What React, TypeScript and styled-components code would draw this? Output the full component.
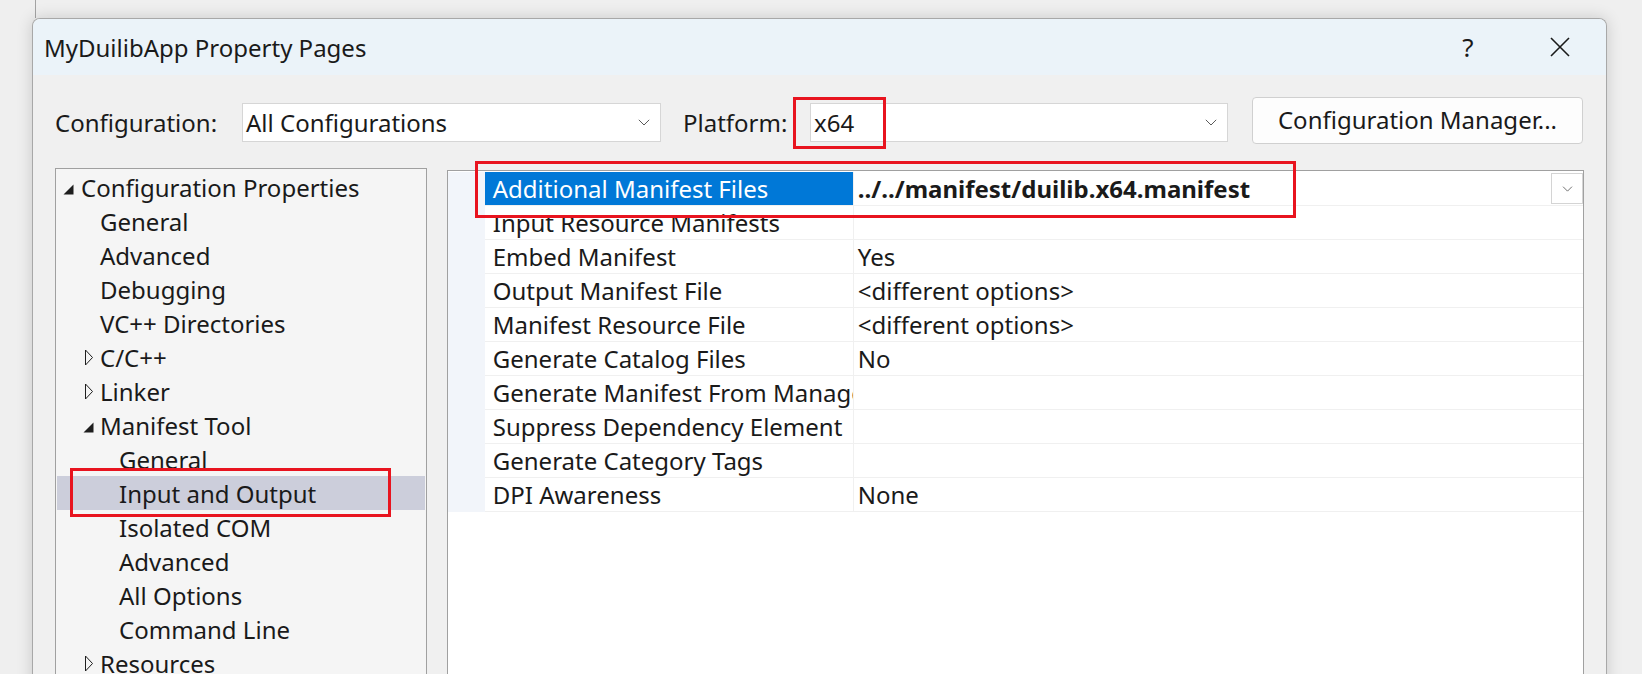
import React from 'react';
import styled, { createGlobalStyle } from 'styled-components';

const GlobalStyle = createGlobalStyle`
  html, body {
    margin: 0;
    padding: 0;
    width: 1642px;
    height: 674px;
    overflow: hidden;
    background: #efefef;
  }
  body {
    font-family: "Noto Sans", "Open Sans", sans-serif;
    color: #1a1a1a;
  }
  * { box-sizing: border-box; }
`;

const Page = styled.div`
  width: 1642px;
  height: 674px;
  overflow: hidden;
  padding: 18px 35px 0 32px;
  background-color: #efefef;
  background-image: linear-gradient(to right, transparent 35px, #a3a3a3 35px, #a3a3a3 36px, transparent 36px);
  background-size: 100% 18px;
  background-repeat: no-repeat;
`;

const Dialog = styled.div`
  width: 1575px;
  height: 720px;
  border: 1px solid #a8a8a8;
  border-bottom: none;
  border-radius: 8px 8px 0 0;
  background: #f0f0f0;
  box-shadow: 0 0 16px rgba(0, 0, 0, 0.16);
  display: flex;
  flex-direction: column;
  overflow: hidden;
`;

const TitleBar = styled.div`
  flex: none;
  height: 56px;
  display: flex;
  align-items: center;
  background: #ebf3f9;
  padding-left: 11px;
`;

const TitleText = styled.div`
  flex: 1;
  font-size: 24px;
  color: #1a1a1a;
`;

const CaptionButton = styled.div`
  width: 92px;
  height: 56px;
  display: flex;
  align-items: center;
  justify-content: center;
  font-size: 26px;
  color: #1a1a1a;
`;

const Body = styled.div`
  flex: 1;
  display: flex;
  flex-direction: column;
  padding: 22px 22px 0 22px;
`;

const Toolbar = styled.div`
  display: flex;
  align-items: flex-start;
  height: 47px;
  padding-left: 0;
`;

const FieldLabel = styled.div<{ $w: number; $ml?: number }>`
  width: ${(p) => p.$w}px;
  margin-left: ${(p) => p.$ml ?? 0}px;
  margin-top: 6px;
  height: 39px;
  line-height: 39px;
  font-size: 24px;
  white-space: nowrap;
`;

const Combo = styled.div<{ $w: number }>`
  position: relative;
  width: ${(p) => p.$w}px;
  height: 39px;
  margin-top: 6px;
  background: #ffffff;
  border: 1px solid #d6d6d6;
  display: flex;
  align-items: center;
  padding-left: 3px;
  padding-right: 10px;
  font-size: 24px;
`;

const ComboText = styled.span`
  flex: 1;
  white-space: nowrap;
`;

const Chevron = styled.svg`
  flex: none;
  display: block;
`;

const ManagerButton = styled.div`
  margin-left: 24px;
  width: 331px;
  height: 47px;
  border: 1px solid #d0d0d0;
  border-radius: 4px;
  background: #fdfdfd;
  display: flex;
  align-items: center;
  justify-content: center;
  font-size: 24px;
  padding-bottom: 2px;
`;

const Panels = styled.div`
  margin-top: 24px;
  display: flex;
  align-items: flex-start;
  gap: 20px;
  flex: 1;
`;

const TreePanel = styled.div`
  width: 372px;
  height: 560px;
  border: 1px solid #a0a0a0;
  background: #f5f5f5;
  padding: 1px;
`;

const TreeRow = styled.div<{ $level: number; $selected?: boolean }>`
  position: relative;
  height: 34px;
  display: flex;
  align-items: center;
  padding-left: ${(p) => 5 + p.$level * 19}px;
  background: ${(p) => (p.$selected ? '#cccedb' : 'transparent')};
  font-size: 24px;
  white-space: nowrap;
`;

const Expander = styled.div`
  width: 19px;
  height: 34px;
  flex: none;
  display: flex;
  align-items: center;
`;

const GridPanel = styled.div`
  margin-top: 2px;
  width: 1138px;
  height: 560px;
  border: 1px solid #a0a0a0;
  background: #ffffff;
  padding-top: 1px;
`;

const GridRow = styled.div`
  position: relative;
  display: grid;
  grid-template-columns: 37px 368px 1fr;
  height: 34px;
`;

const Gutter = styled.div`
  background: #f2f5fa;
`;

const NameCell = styled.div<{ $selected?: boolean }>`
  height: 34px;
  border-bottom: 1px solid #f0f0f0;
  background: ${(p) => (p.$selected ? '#0078d7' : '#ffffff')};
  color: ${(p) => (p.$selected ? '#ffffff' : '#1a1a1a')};
  font-size: 24px;
  line-height: 33px;
  padding-left: 8px;
  white-space: nowrap;
  overflow: hidden;
`;

const ValueCell = styled.div<{ $bold?: boolean }>`
  height: 34px;
  display: flex;
  align-items: flex-start;
  border-bottom: 1px solid #f0f0f0;
  border-left: 1px solid #f0f0f0;
  font-size: 24px;
  font-weight: ${(p) => (p.$bold ? 700 : 400)};
  line-height: 33px;
  padding-left: 4px;
  white-space: nowrap;
  overflow: hidden;
`;

const ValueText = styled.span`
  flex: 1;
`;

const DropButton = styled.div`
  flex: none;
  width: 32px;
  height: 31px;
  margin-top: 1px;
  border: 1px solid #d4d4d4;
  background: #ffffff;
  display: flex;
  align-items: center;
  justify-content: center;
`;

const Highlight = styled.div<{ $l: number; $t: number; $w: number; $h: number }>`
  position: absolute;
  left: ${(p) => p.$l}px;
  top: ${(p) => p.$t}px;
  width: ${(p) => p.$w}px;
  height: ${(p) => p.$h}px;
  border: 3px solid #e8141f;
  pointer-events: none;
  z-index: 3;
`;

const ChevronDown = ({ w = 12, h = 7 }: { w?: number; h?: number }) => (
  <Chevron width={w} height={h} viewBox="0 0 12 7">
    <path d="M0.8 0.8 L6 6 L11.2 0.8" fill="none" stroke="#5a5a5a" strokeWidth="1" />
  </Chevron>
);

const ExpandedIcon = ({ offset }: { offset: number }) => (
  <svg width="11" height="11" viewBox="0 0 11 11" style={{ marginLeft: offset, marginTop: 4 }}>
    <path d="M10.5 0.5 L10.5 10.5 L0.5 10.5 Z" fill="#1e1e1e" />
  </svg>
);

const CollapsedIcon = () => (
  <svg width="10" height="17" viewBox="0 0 10 17" style={{ marginLeft: 3 }}>
    <path d="M1.5 1 L8.5 8.5 L1.5 16 Z" fill="none" stroke="#1e1e1e" strokeWidth="1" />
  </svg>
);

type TreeItem = { label: string; level: number; state?: 'open' | 'closed'; selected?: boolean };

const treeItems: TreeItem[] = [
  { label: 'Configuration Properties', level: 0, state: 'open' },
  { label: 'General', level: 1 },
  { label: 'Advanced', level: 1 },
  { label: 'Debugging', level: 1 },
  { label: 'VC++ Directories', level: 1 },
  { label: 'C/C++', level: 1, state: 'closed' },
  { label: 'Linker', level: 1, state: 'closed' },
  { label: 'Manifest Tool', level: 1, state: 'open' },
  { label: 'General', level: 2 },
  { label: 'Input and Output', level: 2, selected: true },
  { label: 'Isolated COM', level: 2 },
  { label: 'Advanced', level: 2 },
  { label: 'All Options', level: 2 },
  { label: 'Command Line', level: 2 },
  { label: 'Resources', level: 1, state: 'closed' },
];

type Prop = { name: string; value: string; selected?: boolean };

const props: Prop[] = [
  { name: 'Additional Manifest Files', value: '../../manifest/duilib.x64.manifest', selected: true },
  { name: 'Input Resource Manifests', value: '' },
  { name: 'Embed Manifest', value: 'Yes' },
  { name: 'Output Manifest File', value: '<different options>' },
  { name: 'Manifest Resource File', value: '<different options>' },
  { name: 'Generate Catalog Files', value: 'No' },
  { name: 'Generate Manifest From ManagedAssembly', value: '' },
  { name: 'Suppress Dependency Element', value: '' },
  { name: 'Generate Category Tags', value: '' },
  { name: 'DPI Awareness', value: 'None' },
];

export default function App() {
  return (
    <>
      <GlobalStyle />
      <Page>
        <Dialog>
          <TitleBar>
            <TitleText>MyDuilibApp Property Pages</TitleText>
            <CaptionButton>?</CaptionButton>
            <CaptionButton>
              <svg width="20" height="20" viewBox="0 0 20 20">
                <path d="M1 1 L19 19 M19 1 L1 19" stroke="#1a1a1a" strokeWidth="1.6" fill="none" />
              </svg>
            </CaptionButton>
          </TitleBar>
          <Body>
            <Toolbar>
              <FieldLabel $w={187}>Configuration:</FieldLabel>
              <Combo $w={419}>
                <ComboText>All Configurations</ComboText>
                <ChevronDown />
              </Combo>
              <FieldLabel $w={127} $ml={22}>Platform:</FieldLabel>
              <Combo $w={418}>
                <ComboText>x64</ComboText>
                <ChevronDown />
                <Highlight $l={-18} $t={-7} $w={93} $h={52} />
              </Combo>
              <ManagerButton>Configuration Manager...</ManagerButton>
            </Toolbar>
            <Panels>
              <TreePanel>
                {treeItems.map((it, i) => (
                  <TreeRow key={i} $level={it.level} $selected={it.selected}>
                    <Expander>
                      {it.state === 'open' && <ExpandedIcon offset={it.level === 0 ? 1 : 2} />}
                      {it.state === 'closed' && <CollapsedIcon />}
                    </Expander>
                    {it.label}
                    {it.selected && <Highlight $l={13} $t={-8} $w={321} $h={49} />}
                  </TreeRow>
                ))}
              </TreePanel>
              <GridPanel>
                {props.map((p, i) => (
                  <GridRow key={i}>
                    <Gutter />
                    <NameCell $selected={p.selected}>{p.name}</NameCell>
                    <ValueCell $bold={p.selected}>
                      <ValueText>{p.value}</ValueText>
                      {p.selected && (
                        <DropButton>
                          <ChevronDown w={11} h={6} />
                        </DropButton>
                      )}
                    </ValueCell>
                    {p.selected && <Highlight $l={27} $t={-11} $w={821} $h={57} />}
                  </GridRow>
                ))}
              </GridPanel>
            </Panels>
          </Body>
        </Dialog>
      </Page>
    </>
  );
}
